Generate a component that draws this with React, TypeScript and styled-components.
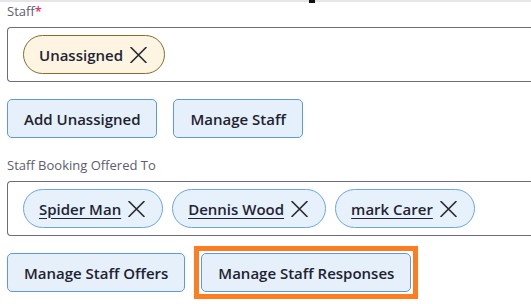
import React from "react";
import styled, { createGlobalStyle, css } from "styled-components";

const GlobalStyle = createGlobalStyle`
  html {
    overflow: hidden;
  }
  body {
    margin: 0;
    padding: 0;
    background: #ffffff;
    font-family: "Open Sans", "Noto Sans", sans-serif;
  }
`;

const TopRule = styled.div`
  position: relative;
  height: 2px;
  background: #e6e6e8;
  &::after {
    content: "";
    position: absolute;
    left: 309px;
    top: 0;
    width: 6px;
    height: 3px;
    background: #111;
  }
`;

const Page = styled.div`
  display: flex;
  flex-direction: column;
  align-items: stretch;
  padding: 0 0 16px 7px;
`;

const Label = styled.div<{ $first?: boolean }>`
  font-size: 13px;
  line-height: 16px;
  font-weight: 500;
  color: #5c5d70;
  margin-top: ${(p) => (p.$first ? "1px" : "19px")};
  margin-bottom: 8px;
`;

const Required = styled.span`
  color: #e8336b;
  font-weight: 600;
`;

const ChipBox = styled.div`
  box-sizing: border-box;
  display: flex;
  align-items: center;
  gap: 9px;
  padding: 7px 15px;
  border: 1px solid #6e6c7a;
  border-right: 0;
  border-radius: 4px 0 0 4px;
`;

const Chip = styled.div<{ $tone: "warn" | "info" }>`
  box-sizing: border-box;
  height: 39px;
  display: inline-flex;
  align-items: center;
  gap: 7px;
  padding: 0 17px 0 15px;
  border-radius: 20px;
  font-size: 15px;
  font-weight: 600;
  color: #1f2433;
  ${(p) =>
    p.$tone === "warn"
      ? css`
          background: #fdf4e2;
          border: 1px solid #8b6a2a;
        `
      : css`
          background: #e6f1fb;
          border: 1px solid #6ea6df;
        `}
`;

const ChipName = styled.span<{ $link?: boolean }>`
  text-decoration: ${(p) => (p.$link ? "underline" : "none")};
  text-decoration-thickness: 1px;
  text-underline-offset: 3px;
`;

const RemoveIcon = styled.svg`
  width: 17px;
  height: 16px;
  flex: none;
  display: block;
`;

const ButtonRow = styled.div`
  display: flex;
  gap: 16px;
  margin-top: 17px;
`;

const Button = styled.button<{ $focused?: boolean }>`
  position: relative;
  box-sizing: border-box;
  height: 39px;
  padding: 0 16px;
  border: 1px solid #5d9ad6;
  border-radius: 5px;
  background: #e6f0fa;
  font-family: "Open Sans", "Noto Sans", sans-serif;
  font-size: 15px;
  font-weight: 600;
  color: #1d2230;
  cursor: pointer;
  outline: none;
  ${(p) =>
    p.$focused &&
    css`
      &::after {
        content: "";
        position: absolute;
        inset: -8px;
        border: 5px solid #ff7d21;
        pointer-events: none;
      }
    `}
`;

const XIcon = () => (
  <RemoveIcon viewBox="0 0 17 16" fill="none">
    <path d="M1 0.5L16 15.5M16 0.5L1 15.5" stroke="#2a2a30" strokeWidth="1.6" strokeLinecap="round" />
  </RemoveIcon>
);

const offered = ["Spider Man", "Dennis Wood", "mark Carer"];

export default function App() {
  return (
    <>
      <GlobalStyle />
      <TopRule />
      <Page>
        <Label $first>
          Staff<Required>*</Required>
        </Label>
        <ChipBox>
          <Chip $tone="warn">
            <ChipName>Unassigned</ChipName>
            <XIcon />
          </Chip>
        </ChipBox>
        <ButtonRow>
          <Button>Add Unassigned</Button>
          <Button>Manage Staff</Button>
        </ButtonRow>

        <Label>Staff Booking Offered To</Label>
        <ChipBox>
          {offered.map((name) => (
            <Chip key={name} $tone="info">
              <ChipName $link>{name}</ChipName>
              <XIcon />
            </Chip>
          ))}
        </ChipBox>
        <ButtonRow>
          <Button>Manage Staff Offers</Button>
          <Button $focused>Manage Staff Responses</Button>
        </ButtonRow>
      </Page>
    </>
  );
}
